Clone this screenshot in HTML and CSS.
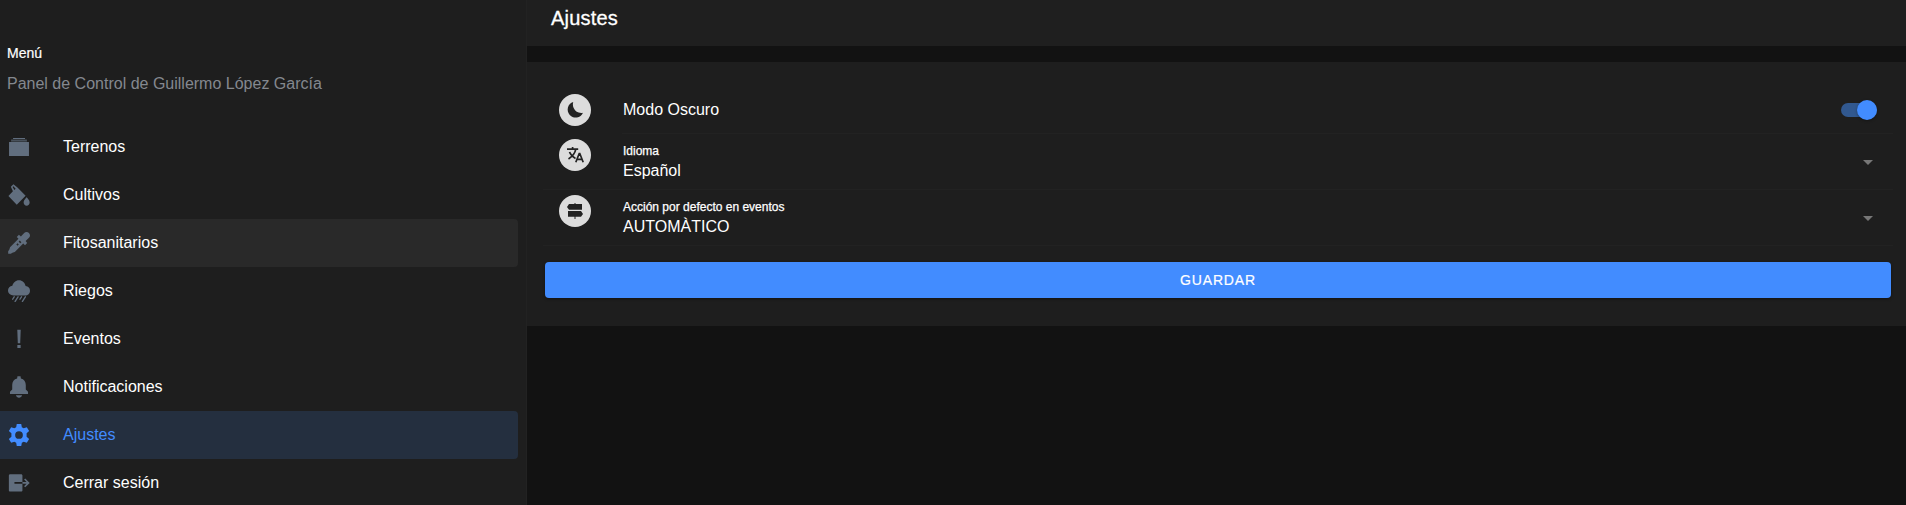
FILE: index.html
```html
<!DOCTYPE html>
<html lang="es">
<head>
<meta charset="utf-8">
<title>Ajustes</title>
<link rel="stylesheet" href="styles.css">
</head>
<body>
<div class="app">
  <aside class="menu">
    <h1 class="menu-title">Menú</h1>
    <p class="menu-note">Panel de Control de Guillermo López García</p>
    <nav class="menu-list">
      <a class="menu-item"><svg class="icon" viewBox="0 0 512 512"><path d="M24 140h464v326H24zM118 46h278v24H118z"/><path d="M72 82h368v48H72z" opacity=".65"/></svg><span>Terrenos</span></a>
      <a class="menu-item"><svg class="icon" viewBox="0 0 512 512"><path fill-rule="evenodd" d="M434 310s-70 62-70 120c0 44 32 74 70 74s70-30 70-74c0-58-70-120-70-120zM126 8L66 66l48 104L10 280l194 202 206-206L220 84zM124 52l54 56-30 32-40-70z"/></svg><span>Cultivos</span></a>
      <a class="menu-item hover"><svg class="icon" viewBox="0 0 512 512"><path fill-rule="evenodd" d="M488 24c-32-32-82-32-112 0l-76 78-46-36-50 50 40 42L48 354l-16 56-28 36v62h62l36-28 56-16 196-196 42 40 50-50-36-46 78-76c32-30 32-80 0-112zM274 200l38 38-26 26-38-38zM222 262l28 28-28 28-28-28z"/></svg><span>Fitosanitarios</span></a>
      <a class="menu-item"><svg class="icon" viewBox="0 0 512 512"><path d="M131 361C57 361 0 313 0 247c0-58 42-104 101-112C117 62 178 4 253 4c83 0 142 58 157 137 62 8 102 46 102 107 0 64-48 113-113 113z"/><path d="M144 392l-36 56M234 392l-68 108M314 392l-36 56M404 392l-68 108" fill="none" stroke="currentColor" stroke-width="32" stroke-linecap="round"/></svg><span>Riegos</span></a>
      <a class="menu-item"><svg class="icon" viewBox="0 0 512 512"><path d="M216 40h80l-12 312h-56zM218 394h76v70h-76z"/></svg><span>Eventos</span></a>
      <a class="menu-item"><svg class="icon" viewBox="0 0 512 512"><path d="M466 366l-52-52V208c0-77-42-135-114-152L292 4h-72l-8 52c-72 17-114 75-114 152v106l-52 52v50h420zM184 450c8 36 38 56 72 56s64-20 72-56z"/></svg><span>Notificaciones</span></a>
      <a class="menu-item active"><svg class="icon" viewBox="0 0 512 512"><path fill-rule="evenodd" d="M204 0h104l14 76 43 25 73-26 54 90-59 50v82l59 50-54 90-73-26-43 25-14 76H204l-14-76-43-25-73 26-54-90 59-50v-82l-59-50 54-90 73 26 43-25zM256 166a90 90 0 100 180 90 90 0 000-180z"/></svg><span>Ajustes</span></a>
      <a class="menu-item"><svg class="icon" viewBox="0 0 512 512"><path d="M150 234h186V86c0-22-12-34-32-34H50c-18 0-30 12-30 34v336c0 22 12 34 30 34h254c20 0 32-12 32-34V274H150z"/><path d="M336 254h138M388 164l90 90-90 90" fill="none" stroke="currentColor" stroke-width="38"/></svg><span>Cerrar sesión</span></a>
    </nav>
  </aside>
  <main class="page">
    <header class="toolbar">Ajustes</header>
    <section class="card">
      <div class="row row-toggle">
        <span class="avatar"><svg viewBox="0 0 16 16"><path d="M6.200 0A8 8 0 1016 10.800 8.500 8.500 0 016.200 0z"/></svg></span>
        <div class="field"><span class="value">Modo Oscuro</span><span class="toggle"></span></div>
      </div>
      <div class="row">
        <span class="avatar"><svg viewBox="0 0 16 16"><path d="M0 2.200h11.200M5.600 0v2.200M2.500 5c1.200 3 3.500 5.200 6 6.400M8.800 2.200C8 6.500 5 9.800 1.500 12M8.800 15.200l3.400-8.700h.6l3.400 8.700M10 12.400h5" fill="none" stroke="currentColor" stroke-width="1.700"/></svg></span>
        <div class="field"><div class="text"><span class="label">Idioma</span><span class="value">Español</span></div><span class="caret"></span></div>
      </div>
      <div class="row">
        <span class="avatar"><svg viewBox="0 0 16 16"><path d="M7.500 0h1v1H15v5.800H2L0 3.900 2 1h5.500zM1 8h13l2 2.900-2 2.900H8.500V16h-1v-2.200H1z"/></svg></span>
        <div class="field"><div class="text"><span class="label">Acción por defecto en eventos</span><span class="value">AUTOMÀTICO</span></div><span class="caret"></span></div>
      </div>
      <button class="save">GUARDAR</button>
    </section>
  </main>
</div>
</body>
</html>
```
FILE: styles.css
```css
* { box-sizing: border-box; }
body { margin: 0; background: #121212; color: #fff; font-family: "Liberation Sans", Arial, sans-serif; font-size: 16px; overflow: hidden; }
.app { display: flex; height: 505px; }
.menu { width: 527px; flex: none; background: #1e1e1e; border-right: 1px solid #222; padding-top: 43px; overflow: hidden; }
.menu-title { margin: 0; padding-left: 7px; font-size: 14px; line-height: 20px; font-weight: 400; -webkit-text-stroke: .2px; }
.menu-note { margin: 11px 0 29px; padding-left: 7px; line-height: 20px; color: #84888f; }
.menu-item { display: flex; align-items: center; gap: 33px; width: 518px; height: 48px; padding: 0 8px; border-radius: 0 4px 4px 0; }
.menu-item.hover { background: #292929; }
.menu-item.active { background: #242f3f; color: #428cff; }
.icon { width: 22px; height: 22px; fill: currentColor; color: #616e7e; }
.active .icon { color: #428cff; }
.page { flex: 1; }
.toolbar { height: 46px; margin-bottom: 16px; padding: 6px 23px 0 24px; background: #1f1f1f; font-size: 20px; line-height: 24px; letter-spacing: .2px; -webkit-text-stroke: .3px; }
.card { height: 264px; background: #1e1e1e; padding: 24px 13px 0 16px; }
.row { display: flex; height: 56px; padding-left: 16px; border-bottom: 1px solid #222; }
.row-toggle { height: 48px; border: 0; }
.avatar { display: flex; flex: none; align-items: center; justify-content: center; width: 32px; height: 32px; margin: 5px 31px 0 0; border-radius: 50%; background: #dcdcdc; color: #222; }
.row-toggle .avatar { margin-top: 8px; }
.avatar svg { width: 16px; height: 16px; fill: currentColor; overflow: visible; }
.field { display: flex; flex: 1; align-items: center; justify-content: space-between; padding: 2px 16px 0 0; }
.row-toggle .field { border-bottom: 1px solid #222; padding-top: 0; }
.text { display: flex; flex-direction: column; padding-left: 1px; }
.row-toggle .value { padding-left: 1px; }
.label { font-size: 12px; line-height: 16px; -webkit-text-stroke: .25px; }
.text .value { line-height: 24px; }
.toggle { display: flex; align-items: center; justify-content: flex-end; width: 36px; height: 14px; border-radius: 7px; background: #31588f; }
.toggle::after { content: ""; width: 20px; height: 20px; flex: none; border-radius: 50%; background: #428cff; box-shadow: 0 1px 3px #0005; }
.caret { margin-right: 4px; border: 5px solid transparent; border-top-color: #777; border-bottom: 0; }
.save { display: block; width: calc(100% - 4px); height: 36px; margin: 16px 2px 0; padding: 0; border: 0; border-radius: 4px; background: #428cff; box-shadow: 0 1px 3px #0006; color: #fff; font: 14px "Liberation Sans", Arial, sans-serif; letter-spacing: .84px; -webkit-text-stroke: .2px; }
```
